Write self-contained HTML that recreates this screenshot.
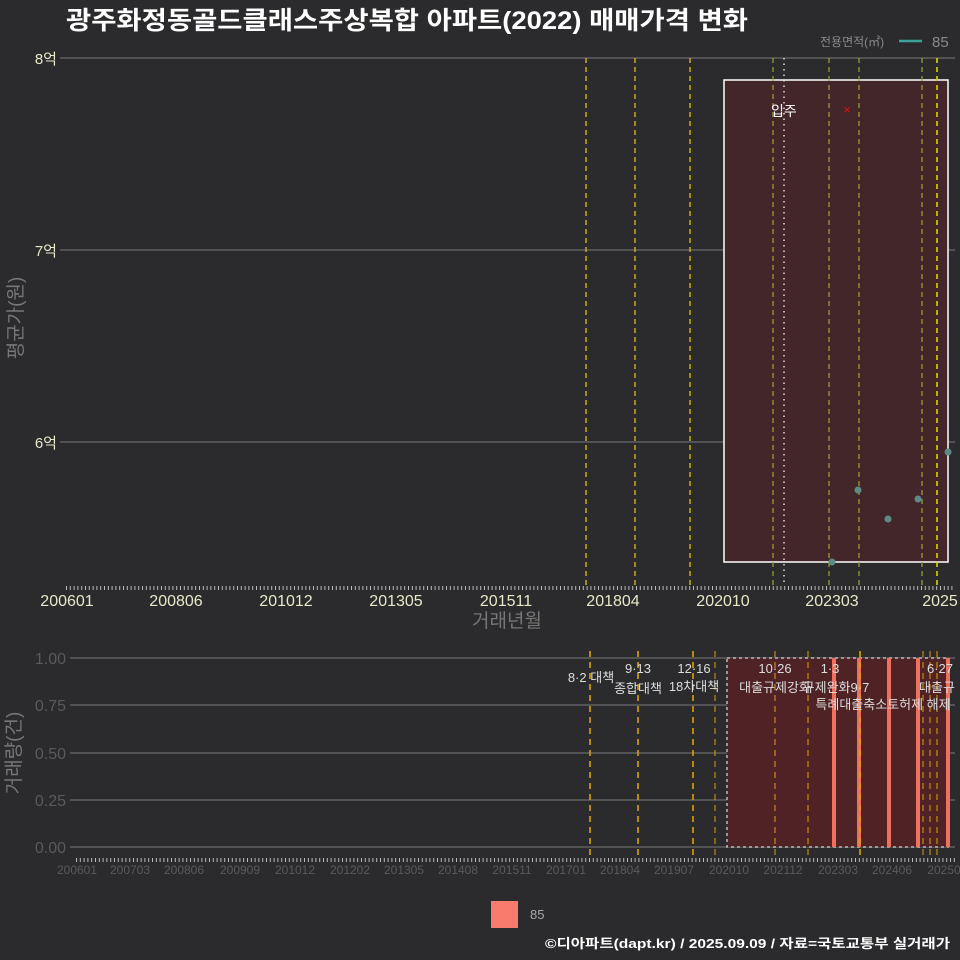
<!DOCTYPE html>
<html><head><meta charset="utf-8"><style>
html,body{margin:0;padding:0;background:#2b2b2d}
svg{display:block;font-family:"Liberation Sans","Noto Sans CJK KR",sans-serif}
</style></head><body>
<svg width="960" height="960" viewBox="0 0 960 960" xmlns="http://www.w3.org/2000/svg">
<rect width="960" height="960" fill="#2b2b2d"/>
<text x="66" y="29" font-size="25" font-weight="bold" fill="#fff" textLength="682" lengthAdjust="spacingAndGlyphs">광주화정동골드클래스주상복합 아파트(2022) 매매가격 변화</text>
<text x="820" y="46" font-size="12" fill="#8a8a8a">전용면적(㎡)</text>
<line x1="899" y1="41" x2="922" y2="41" stroke="#3aa39a" stroke-width="2.5"/>
<text x="932" y="47" font-size="15" fill="#8a8a8a">85</text>
<g stroke="#6a6a6a" stroke-width="1.2">
<line x1="60" y1="58" x2="955" y2="58"/><line x1="60" y1="250" x2="955" y2="250"/><line x1="60" y1="442" x2="955" y2="442"/>
</g>
<g font-size="15" fill="#e8e8c8" text-anchor="end">
<text x="57" y="64">8억</text><text x="57" y="256">7억</text><text x="57" y="448">6억</text>
</g>
<text transform="translate(22,318) rotate(-90)" font-size="19" fill="#777" text-anchor="middle">평균가(원)</text>
<rect x="724" y="80" width="224" height="482" fill="#43262a" stroke="#fff" stroke-width="1.5"/>
<g stroke-width="1.3" stroke-dasharray="5,4">
<line x1="586" y1="58" x2="586" y2="585" stroke="#e0c000"/>
<line x1="635" y1="58" x2="635" y2="585" stroke="#e0c000"/>
<line x1="690" y1="58" x2="690" y2="585" stroke="#e0c000"/>
<line x1="773" y1="58" x2="773" y2="585" stroke="#9a9a30"/>
<line x1="829" y1="58" x2="829" y2="585" stroke="#9a9a30"/>
<line x1="859" y1="58" x2="859" y2="585" stroke="#9a9a30"/>
<line x1="922" y1="58" x2="922" y2="585" stroke="#9a9a30"/>
<line x1="937" y1="58" x2="937" y2="585" stroke="#e0d000" stroke-width="1.6"/>
</g>
<line x1="784" y1="58" x2="784" y2="585" stroke="#ddd" stroke-width="1.5" stroke-dasharray="1.5,4"/>
<text x="771" y="116" font-size="14" fill="#fff">입주</text>
<text x="847" y="114" font-size="13" fill="#e01010" text-anchor="middle">×</text>
<g fill="#5d8a84">
<circle cx="832" cy="562" r="3.5"/><circle cx="858" cy="490" r="3.5"/><circle cx="888" cy="519" r="3.5"/><circle cx="918" cy="499" r="3.5"/><circle cx="948" cy="452" r="3.5"/>
</g>
<line x1="66" y1="588" x2="955" y2="588" stroke="#bbb" stroke-width="4" stroke-dasharray="1,2.8"/>
<g font-size="16" fill="#e8e8c8" text-anchor="middle">
<text x="67" y="606">200601</text><text x="176" y="606">200806</text><text x="286" y="606">201012</text><text x="396" y="606">201305</text><text x="506" y="606">201511</text><text x="613" y="606">201804</text><text x="723" y="606">202010</text><text x="832" y="606">202303</text><text x="940" y="606">2025</text>
</g>
<text x="507" y="627" font-size="19" fill="#777" text-anchor="middle">거래년월</text>
<g stroke="#6a6a6a" stroke-width="1.2">
<line x1="70" y1="658" x2="955" y2="658"/><line x1="70" y1="705" x2="955" y2="705"/><line x1="70" y1="753" x2="955" y2="753"/><line x1="70" y1="800" x2="955" y2="800"/><line x1="70" y1="847" x2="955" y2="847"/>
</g>
<g font-size="16" fill="#5a5a5a" text-anchor="end">
<text x="66" y="664">1.00</text><text x="66" y="711">0.75</text><text x="66" y="759">0.50</text><text x="66" y="806">0.25</text><text x="66" y="853">0.00</text>
</g>
<text transform="translate(20,753) rotate(-90)" font-size="19" fill="#777" text-anchor="middle">거래량(건)</text>
<rect x="727" y="658" width="221" height="189" fill="#4f2326" stroke="#bbb" stroke-width="1.5" stroke-dasharray="3,3"/>
<g fill="#f0705e">
<rect x="832" y="658" width="4" height="189"/><rect x="857" y="658" width="4" height="189"/><rect x="887" y="658" width="4" height="189"/><rect x="916" y="658" width="4" height="189"/><rect x="946" y="658" width="4" height="189"/>
</g>
<g stroke="#e0a000" stroke-width="1.6" stroke-dasharray="6,5">
<line x1="590" y1="651" x2="590" y2="858"/><line x1="638" y1="651" x2="638" y2="858"/><line x1="693" y1="651" x2="693" y2="858"/>
<line x1="715" y1="651" x2="715" y2="858" stroke-width="1"/><line x1="775" y1="651" x2="775" y2="858" stroke-width="1"/><line x1="808" y1="651" x2="808" y2="858" stroke-width="1"/>
<line x1="860" y1="651" x2="860" y2="858"/><line x1="923" y1="651" x2="923" y2="858" stroke-width="1"/><line x1="930" y1="651" x2="930" y2="858" stroke-width="1"/><line x1="937" y1="651" x2="937" y2="858" stroke-width="1"/>
</g>
<g font-size="13" fill="#ddd" text-anchor="middle">
<text x="591" y="682">8·2 대책</text>
<text x="638" y="673">9·13</text><text x="638" y="693">종합대책</text>
<text x="694" y="673">12·16</text><text x="694" y="691">18차대책</text>
<text x="775" y="673">10·26</text><text x="775" y="692">대출규제강화</text>
<text x="830" y="673">1·3</text><text x="836" y="692">규제완화9·7</text>
<text x="883" y="709">특례대출축소토허제 해제</text>
<text x="940" y="673">6·27</text><text x="937" y="692">대출규</text>
</g>
<line x1="76" y1="860" x2="955" y2="860" stroke="#bbb" stroke-width="4" stroke-dasharray="1,2.8"/>
<g font-size="12" fill="#5a5a5a" text-anchor="middle">
<text x="77" y="874">200601</text><text x="130" y="874">200703</text><text x="184" y="874">200806</text><text x="240" y="874">200909</text><text x="295" y="874">201012</text><text x="350" y="874">201202</text><text x="404" y="874">201305</text><text x="458" y="874">201408</text><text x="512" y="874">201511</text><text x="566" y="874">201701</text><text x="620" y="874">201804</text><text x="674" y="874">201907</text><text x="729" y="874">202010</text><text x="783" y="874">202112</text><text x="838" y="874">202303</text><text x="892" y="874">202406</text><text x="944" y="874">20250</text>
</g>
<rect x="491" y="901" width="27" height="27" fill="#f87b6e"/>
<text x="530" y="919" font-size="13" fill="#aaa">85</text>
<text x="545" y="948" font-size="13" font-weight="bold" fill="#fff" textLength="405" lengthAdjust="spacingAndGlyphs">©디아파트(dapt.kr) / 2025.09.09 / 자료=국토교통부 실거래가</text>
</svg>
</body></html>
